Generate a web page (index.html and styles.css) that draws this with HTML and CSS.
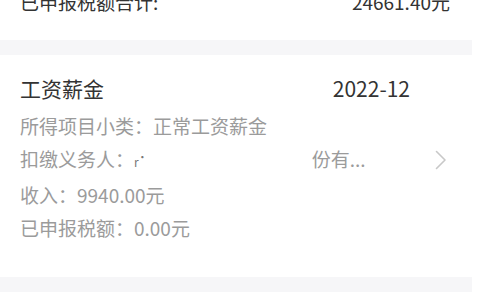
FILE: index.html
```html
<!DOCTYPE html>
<html lang="zh-CN">
<head>
<meta charset="utf-8">
<link rel="stylesheet" href="styles.css">
</head>
<body>
<div class="page">
  <div class="summary">
    <div class="summary-line">
      <span>已申报税额合计:</span>
      <span>24661.40元</span>
    </div>
  </div>
  <div class="band"></div>
  <div class="card">
    <div class="title-row">
      <span>工资薪金</span>
      <span>2022-12</span>
    </div>
    <div class="detail">所得项目小类：正常工资薪金</div>
    <div class="detail detail-link">
      <span>扣缴义务人：<span class="mark">ṙ</span><span class="gap"></span>份有...</span>
      <svg class="chevron" width="12" height="20" viewBox="0 0 12 20"><path d="M1.5 1.5 L10 10 L1.5 18.5" fill="none" stroke="#c8c8c8" stroke-width="1.6" stroke-linecap="round" stroke-linejoin="round"/></svg>
    </div>
    <div class="detail">收入：9940.00元</div>
    <div class="detail">已申报税额：0.00元</div>
  </div>
  <div class="band"></div>
</div>
</body>
</html>
```

FILE: styles.css
```css
html, body {
  margin: 0;
  padding: 0;
  background: #ffffff;
}
body {
  font-family: "Noto Sans CJK SC", "Noto Sans", sans-serif;
  overflow: hidden;
}
.page {
  width: 480px;
  height: 300px;
  overflow: hidden;
}
.summary {
  display: flex;
  align-items: flex-start;
  height: 40px;
}
.summary-line {
  flex: 1;
  margin-top: -10px;
  display: flex;
  justify-content: space-between;
  padding: 0 30px 0 20px;
  font-size: 19px;
  line-height: 24px;
  color: #333333;
}
.band {
  width: 472px;
  height: 15px;
  background: #f6f6f8;
}
.card {
  padding: 17px 0 33px 20px;
}
.title-row {
  display: flex;
  justify-content: space-between;
  padding-right: 70px;
  font-size: 21px;
  line-height: 32px;
  color: #333333;
  margin-bottom: 5px;
}
.detail {
  font-size: 19px;
  line-height: 33px;
  color: #9b9b9b;
  white-space: nowrap;
}
.detail-link {
  display: flex;
  align-items: center;
  justify-content: space-between;
  padding-right: 33px;
}
.mark {
  font-size: 12px;
  color: #777;
}
.gap {
  display: inline-block;
  width: 173px;
}
.chevron {
  display: block;
}
```
